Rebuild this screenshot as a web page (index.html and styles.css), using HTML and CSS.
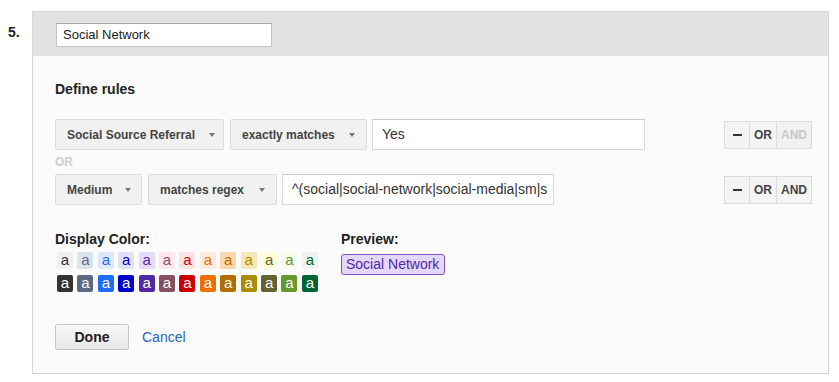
FILE: index.html
```html
<!DOCTYPE html>
<html>
<head>
<meta charset="utf-8">
<link rel="stylesheet" href="styles.css">
</head>
<body>
<div class="page">
  <div class="num">5.</div>
  <div class="panel">
    <div class="panel-head">
      <div class="name-input">Social Network</div>
    </div>
    <div class="panel-body">
      <div class="section-title">Define rules</div>
      <div class="rule-row">
        <div class="rule-fields">
          <div class="select w1"><span>Social Source Referral</span><i class="caret"></i></div>
          <div class="select w2"><span>exactly matches</span><i class="caret"></i></div>
          <div class="text-input w3">Yes</div>
        </div>
        <div class="seg">
          <div class="seg-btn minus"><i class="dash"></i></div>
          <div class="seg-btn or">OR</div>
          <div class="seg-btn and disabled">AND</div>
        </div>
      </div>
      <div class="or-label">OR</div>
      <div class="rule-row">
        <div class="rule-fields">
          <div class="select w4"><span>Medium</span><i class="caret"></i></div>
          <div class="select w5"><span>matches regex</span><i class="caret"></i></div>
          <div class="text-input w6">^(social|social-network|social-media|sm|s</div>
        </div>
        <div class="seg">
          <div class="seg-btn minus"><i class="dash"></i></div>
          <div class="seg-btn or">OR</div>
          <div class="seg-btn and">AND</div>
        </div>
      </div>
      <div class="color-area">
        <div class="color-col">
          <div class="section-title">Display Color:</div>
          <div class="swatches">
            <div class="sw l1">a</div><div class="sw l2">a</div><div class="sw l3">a</div><div class="sw l4">a</div><div class="sw l5">a</div><div class="sw l6">a</div><div class="sw l7">a</div><div class="sw l8">a</div><div class="sw l9">a</div><div class="sw l10">a</div><div class="sw l11">a</div><div class="sw l12">a</div><div class="sw l13">a</div>
            <div class="sw d1">a</div><div class="sw d2">a</div><div class="sw d3">a</div><div class="sw d4">a</div><div class="sw d5">a</div><div class="sw d6">a</div><div class="sw d7">a</div><div class="sw d8">a</div><div class="sw d9">a</div><div class="sw d10">a</div><div class="sw d11">a</div><div class="sw d12">a</div><div class="sw d13">a</div>
          </div>
        </div>
        <div class="preview-col">
          <div class="section-title">Preview:</div>
          <div class="badge">Social Network</div>
        </div>
      </div>
      <div class="actions">
        <div class="btn-done">Done</div>
        <a class="cancel">Cancel</a>
      </div>
    </div>
  </div>
</div>
</body>
</html>
```
FILE: styles.css
```css
* { box-sizing: border-box; }
html, body { margin: 0; padding: 0; background: #fff; }
body { font-family: "Liberation Sans", Arial, sans-serif; color: #222; }

.page { display: flex; padding-top: 11px; }
.num { width: 32px; padding-left: 8px; padding-top: 13px; font-size: 14px; font-weight: bold; line-height: 17px; color: #222; }

.panel { width: 797px; border: 1px solid #d6d6d6; background: #fbfbfb; }
.panel-head { background: #e2e2e2; height: 44px; padding: 11px 0 0 23px; }
.name-input { width: 216px; height: 24px; background: #fff; border: 1px solid #c4c4c4; border-top-color: #a8a8a8; font-size: 13px; line-height: 22px; padding-left: 6px; color: #222; }

.panel-body { padding: 25px 0 23px 22px; }
.section-title { font-size: 14px; font-weight: bold; line-height: 17px; color: #222; }

.rule-row { display: flex; align-items: center; justify-content: space-between; padding-right: 16px; height: 31px; }
.panel-body > .section-title { margin-bottom: 21px; }
.rule-fields { display: flex; gap: 6px; }

.select { height: 31px; display: flex; align-items: center; justify-content: space-between; padding: 0 8px 0 11px; background: #f1f1f1; border: 1px solid #dcdcdc; border-radius: 2px; font-size: 12px; font-weight: bold; color: #444; }
.caret { width: 0; height: 0; border-left: 3.5px solid transparent; border-right: 3.5px solid transparent; border-top: 4px solid #777; margin-top: 1px; }
.w1 { width: 169px; }
.w2 { width: 137px; padding-right: 11px; }
.w4 { width: 87px; padding-right: 10px; }
.w5 { width: 129px; padding-right: 11px; }

.text-input { height: 31px; background: #fff; border: 1px solid #d9d9d9; border-top-color: #c8c8c8; font-size: 14px; line-height: 29px; padding: 0 9px; color: #333; white-space: nowrap; overflow: hidden; }
.w3 { width: 273px; margin-left: -1px; }
.w6 { width: 272px; margin-left: -1px; }

.seg { display: flex; height: 28px; }
.seg-btn { height: 28px; background: #f4f4f4; border: 1px solid #dcdcdc; font-size: 12px; font-weight: bold; color: #444; display: flex; align-items: center; justify-content: center; }
.seg-btn + .seg-btn { border-left: none; }
.minus { width: 26px; }
.dash { display: block; width: 9px; height: 2px; background: #333; }
.or { width: 27px; }
.and { width: 35px; }
.and.disabled { color: #c8c8c8; background: #f1f1f1; }

.or-label { height: 24px; line-height: 24px; font-size: 12px; font-weight: bold; color: #cfcfcf; }

.color-area { display: flex; margin-top: 26px; }
.color-col { width: 286px; }
.swatches { display: grid; grid-template-columns: repeat(13, 16px); column-gap: 4.42px; row-gap: 6px; margin-top: 4px; padding-left: 2px; }
.sw { width: 16px; height: 17px; border-radius: 2px; font-size: 15px; line-height: 16px; text-align: center; }
.l1 { background: #efefef; color: #333; }
.l2 { background: #dde3ee; color: #5a6986; }
.l3 { background: #dce8ff; color: #206cff; }
.l4 { background: #e0e0fc; color: #0000cc; }
.l5 { background: #e5dcf8; color: #5229a3; }
.l6 { background: #fde6f0; color: #854f61; }
.l7 { background: #ffe3e3; color: #cc0000; }
.l8 { background: #ffeadd; color: #ec7000; }
.l9 { background: #fbd8ab; color: #b36d00; }
.l10 { background: #f3e8b4; color: #ab8b00; }
.l11 { background: #fdfed6; color: #636330; }
.l12 { background: #f6fdee; color: #64992c; }
.l13 { background: #eff4ee; color: #006633; }
.d1 { background: #333333; color: #fff; }
.d2 { background: #5a6986; color: #fff; }
.d3 { background: #206cff; color: #fff; }
.d4 { background: #0000cc; color: #fff; }
.d5 { background: #5229a3; color: #fff; }
.d6 { background: #854f61; color: #fff; }
.d7 { background: #cc0000; color: #fff; }
.d8 { background: #ec7000; color: #fff; }
.d9 { background: #b36d00; color: #fff; }
.d10 { background: #ab8b00; color: #fff; }
.d11 { background: #636330; color: #fff; }
.d12 { background: #64992c; color: #fff; }
.d13 { background: #006633; color: #fff; }

.preview-col { display: flex; flex-direction: column; align-items: flex-start; }
.badge { margin-top: 6px; height: 21px; padding: 0 5px 0 4px; background: #e3d7fa; border: 1px solid #7c54c8; border-radius: 3px; font-size: 14px; line-height: 19px; color: #5229a3; }

.actions { display: flex; align-items: center; margin-top: 32px; }
.btn-done { width: 74px; height: 26px; border: 1px solid #c6c6c6; border-radius: 2px; background: linear-gradient(#f8f8f8, #e8e8e8); font-size: 14px; font-weight: bold; color: #222; display: flex; align-items: center; justify-content: center; }
.cancel { margin-left: 13px; font-size: 14px; color: #1f66bd; cursor: pointer; }
```
